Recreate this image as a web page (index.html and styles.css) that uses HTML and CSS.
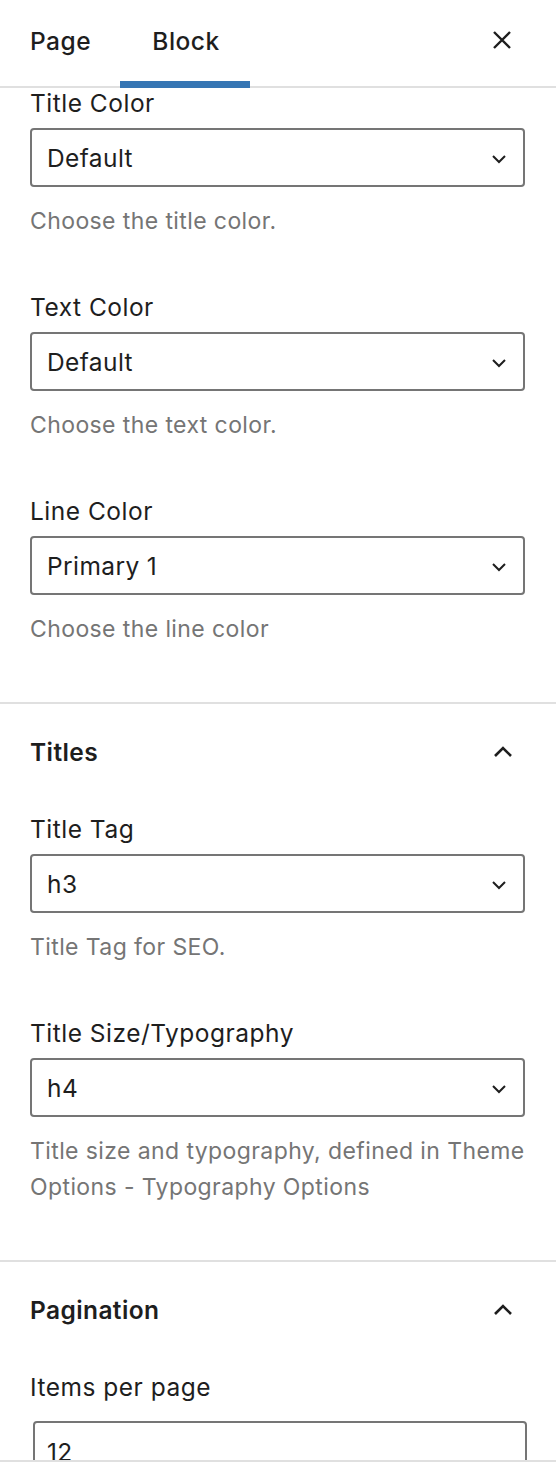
FILE: index.html
```html
<!DOCTYPE html>
<html>
<head>
<meta charset="utf-8">
<link rel="stylesheet" href="styles.css">
</head>
<body>
<div class="sidebar">
  <div class="tabs">
    <div class="tab">Page</div>
    <div class="tab active">Block</div>
    <div class="close">
      <svg width="24" height="24" viewBox="0 0 24 24"><path d="M4 4 L20 20 M20 4 L4 20" stroke="#1e1e1e" stroke-width="2.4" fill="none"/></svg>
    </div>
  </div>
  <div class="scroll">
    <div class="section first">
      <div class="field">
        <div class="label">Title Color</div>
        <div class="select"><span>Default</span><svg class="chev" width="16" height="10" viewBox="0 0 16 10"><path d="M2 2 L8 8 L14 2" stroke="#1e1e1e" stroke-width="2" fill="none"/></svg></div>
        <div class="help">Choose the title color.</div>
      </div>
      <div class="field">
        <div class="label">Text Color</div>
        <div class="select"><span>Default</span><svg class="chev" width="16" height="10" viewBox="0 0 16 10"><path d="M2 2 L8 8 L14 2" stroke="#1e1e1e" stroke-width="2" fill="none"/></svg></div>
        <div class="help">Choose the text color.</div>
      </div>
      <div class="field">
        <div class="label">Line Color</div>
        <div class="select"><span>Primary 1</span><svg class="chev" width="16" height="10" viewBox="0 0 16 10"><path d="M2 2 L8 8 L14 2" stroke="#1e1e1e" stroke-width="2" fill="none"/></svg></div>
        <div class="help">Choose the line color</div>
      </div>
    </div>
    <div class="section">
      <div class="heading"><span>Titles</span><svg width="24" height="16" viewBox="0 0 24 16"><path d="M4 12 L12 4 L20 12" stroke="#1e1e1e" stroke-width="2.6" fill="none"/></svg></div>
      <div class="field">
        <div class="label">Title Tag</div>
        <div class="select"><span>h3</span><svg class="chev" width="16" height="10" viewBox="0 0 16 10"><path d="M2 2 L8 8 L14 2" stroke="#1e1e1e" stroke-width="2" fill="none"/></svg></div>
        <div class="help">Title Tag for SEO.</div>
      </div>
      <div class="field">
        <div class="label">Title Size/Typography</div>
        <div class="select"><span>h4</span><svg class="chev" width="16" height="10" viewBox="0 0 16 10"><path d="M2 2 L8 8 L14 2" stroke="#1e1e1e" stroke-width="2" fill="none"/></svg></div>
        <div class="help">Title size and typography, defined in Theme Options - Typography Options</div>
      </div>
    </div>
    <div class="section">
      <div class="heading"><span>Pagination</span><svg width="24" height="16" viewBox="0 0 24 16"><path d="M4 12 L12 4 L20 12" stroke="#1e1e1e" stroke-width="2.6" fill="none"/></svg></div>
      <div class="field">
        <div class="label">Items per page</div>
        <div class="input">12</div>
      </div>
    </div>
  </div>
</div>
</body>
</html>
```

FILE: styles.css
```css
* { box-sizing: border-box; }
html, body { margin: 0; padding: 0; background: #fff; }
body {
  font-family: Inter, "Noto Sans", "Liberation Sans", sans-serif;
  color: #1e1e1e;
  width: 556px;
  height: 1468px;
  overflow: hidden;
}
.sidebar { display: flex; flex-direction: column; }
.tabs {
  display: flex;
  align-items: stretch;
  height: 88px;
  border-bottom: 2px solid #e0e0e0;
}
.tab {
  font-size: 24.5px;
  font-weight: 500;
  letter-spacing: 0.5px;
  display: flex;
  align-items: center;
  justify-content: center;
  width: 120px;
  margin-bottom: -2px;
  border-bottom: 7px solid transparent;
}
.tab:first-child { width: 120px; justify-content: flex-start; padding-left: 30px; }
.tab.active { width: 130px; border-bottom-color: #3676b4; padding-left: 2px; }
.close {
  margin-left: auto;
  width: 80px;
  display: flex;
  align-items: center;
  justify-content: center;
  padding-bottom: 6px;
  padding-right: 28px;
}
.scroll {
  height: 1374px;
  overflow: hidden;
  border-bottom: 2px solid #e0e0e0;
}
.section {
  border-bottom: 2px solid #e0e0e0;
  padding: 33px 31px 55px 30px;
}
.section.first { padding-top: 0; }
.field + .field { margin-top: 53px; }
.heading {
  display: flex;
  justify-content: space-between;
  align-items: center;
  font-size: 24.5px;
  letter-spacing: 0.5px;
  line-height: 30px;
  height: 30px;
  margin-bottom: 47px;
  padding-right: 10px;
}
.heading span { font-weight: 600; letter-spacing: 0.4px; }
.label {
  font-size: 24.5px;
  letter-spacing: 0.5px;
  line-height: 30px;
  height: 30px;
}
.select {
  margin-top: 10px;
  height: 59px;
  border: 2px solid #757575;
  border-radius: 4px;
  display: flex;
  align-items: center;
  justify-content: space-between;
  padding: 0 16px 0 15px;
  font-size: 24.5px;
  letter-spacing: 0.4px;
}
.chev { margin-top: 2px; }
.help {
  margin-top: 16px;
  margin-right: -10px;
  font-size: 23px;
  letter-spacing: 0.4px;
  line-height: 36px;
  color: #757575;
}
.input {
  margin-top: 19px;
  margin-left: 3px;
  margin-right: -2px;
  height: 59px;
  border: 2px solid #757575;
  border-radius: 4px;
  font-size: 24.5px;
  letter-spacing: 0.4px;
  padding: 14px 0 0 12px;
}
```
